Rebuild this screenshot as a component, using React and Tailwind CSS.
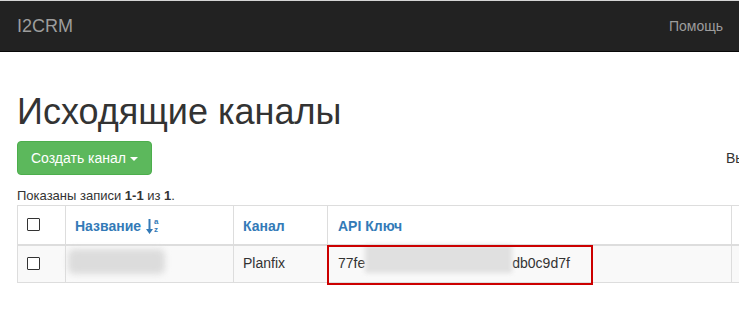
import React from "react";

function SortAlpha() {
  return (
    <span className="inline-flex items-center ml-[5px] align-[-3px] text-[#337ab7]">
      <svg width="7" height="15" viewBox="0 0 7 15" className="block">
        <path d="M2.5 0h2v10h2.5l-3.5 5l-3.5-5h2.5z" fill="currentColor" />
      </svg>
      <span className="flex flex-col ml-[1px] text-[8px] leading-[8px] font-bold">
        <span>a</span>
        <span>z</span>
      </span>
    </span>
  );
}

function Checkbox() {
  return <span className="block w-[13px] h-[13px] border border-[#333] bg-white rounded-[1px]" />;
}

export default function App() {
  const cell = "border border-[#ddd] text-left align-middle";

  return (
    <div className="w-[739px] h-[310px] overflow-hidden bg-white text-[#333] text-[14px] font-['Liberation_Sans',Arial,sans-serif]">
      <nav className="h-[52px] border-t border-t-[#d5d5d5] border-b border-b-[#080808] bg-[#222] flex items-center justify-between pl-[17px] pr-[16px]">
        <span className="text-[18px] text-[#9d9d9d] leading-[20px]">I2CRM</span>
        <span className="text-[14px] text-[#9d9d9d]">Помощь</span>
      </nav>

      <div className="pl-[17px]">
        <h1 className="text-[36px] leading-[40px] font-normal mt-[40px] mb-[9px]">Исходящие каналы</h1>

        <div className="flex items-center justify-between">
          <button className="h-[34px] px-[13px] rounded-[4px] bg-[#5cb85c] border border-[#4cae4c] text-white text-[14px] flex items-center gap-[4px]">
            Создать канал
            <span className="w-0 h-0 border-l-[4px] border-r-[4px] border-t-[4px] border-l-transparent border-r-transparent border-t-white mt-[1px]" />
          </button>
          <span className="w-[13px] overflow-hidden whitespace-nowrap text-[14px] text-[#333]">Вы</span>
        </div>

        <div className="mt-[12px] text-[13px] leading-[18px]">
          Показаны записи <b>1-1</b> из <b>1</b>.
        </div>

        <table className="border-collapse table-fixed w-[800px]">
          <colgroup>
            <col className="w-[48px]" />
            <col className="w-[168px]" />
            <col className="w-[94px]" />
            <col className="w-[404px]" />
            <col className="w-[86px]" />
          </colgroup>
          <thead>
            <tr className="h-[39px]">
              <th className={cell + " border-b-2 pl-[9px]"}>
                <Checkbox />
              </th>
              <th className={cell + " border-b-2 pl-[9px] pt-[3px]"}>
                <a className="text-[#337ab7] font-bold">Название</a>
                <SortAlpha />
              </th>
              <th className={cell + " border-b-2 pl-[9px] pt-[3px] text-[#337ab7] font-bold"}>Канал</th>
              <th className={cell + " border-b-2 pl-[10px] pt-[3px] text-[#337ab7] font-bold"}>API Ключ</th>
              <th className={cell + " border-b-2"} />
            </tr>
          </thead>
          <tbody>
            <tr className="h-[38px] bg-[#f9f9f9]">
              <td className={cell + " pl-[9px]"}>
                <Checkbox />
              </td>
              <td className={cell + " pl-[2px]"}>
                <div className="h-[25px] w-[97px] -mt-[4px] rounded-[6px] bg-[#dcdcdc] blur-[3px]" />
              </td>
              <td className={cell + " pl-[9px]"}>Planfix</td>
              <td className={cell + " relative pl-[10px] whitespace-nowrap"}>
                <div className="flex items-center">
                  <span>77fe</span>
                  <span className="h-[28px] w-[147px] -mt-[10px] bg-[#e0e0e0] blur-[2px]" />
                  <span>db0c9d7f</span>
                </div>
                <div className="absolute -left-[1px] -top-[1px] w-[266px] h-[40px] border-2 border-[#cc0000]" />
              </td>
              <td className={cell} />
            </tr>
          </tbody>
        </table>
      </div>
    </div>
  );
}
